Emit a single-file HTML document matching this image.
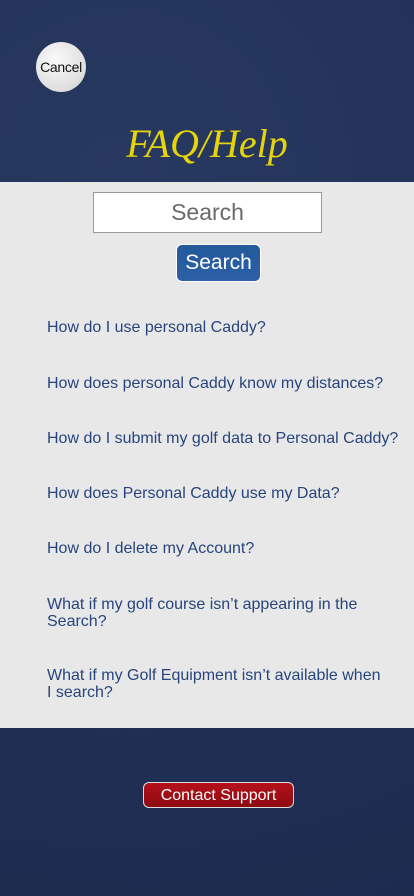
<!DOCTYPE html>
<html><head><meta charset="utf-8"><style>
body{margin:0;width:414px;height:896px;position:relative;overflow:hidden;font-family:"Liberation Sans",Arial,sans-serif;
background:#22325a;}
.tex{position:absolute;left:0;top:0;width:414px;height:896px;
background:radial-gradient(circle at 30% 20%,#283961 0,#213056 60%,#1d2b4f 100%);}
.panel{position:absolute;left:0;top:182px;width:414px;height:546px;background:#e8e8e8;}
.cancel{position:absolute;left:36px;top:42px;width:50px;height:50px;border-radius:50%;
background:radial-gradient(circle at 40% 35%,#fafafa,#dedede 70%,#c8c8c8);font-size:14px;color:#111;
display:flex;align-items:center;justify-content:center;letter-spacing:-0.3px;}
.title{position:absolute;left:0;width:414px;top:120px;text-align:center;color:#e6d40a;
font-family:"Liberation Serif",serif;font-style:italic;font-size:40px;}
.input{position:absolute;left:93px;top:192px;width:227px;height:39px;background:#fff;border:1px solid #999;
text-align:center;font-size:23px;line-height:39px;color:#6a6a6a;}
.btn{position:absolute;left:176px;top:244px;width:85px;height:38px;border-radius:6px;background:linear-gradient(#235a9a,#2c60a8);
border:1px solid #fff;box-sizing:border-box;color:#fff;font-size:21px;line-height:36px;text-align:center;}
.q{position:absolute;left:47px;width:345px;color:#27457c;font-size:16px;line-height:17px;white-space:nowrap;}
.cs{position:absolute;left:143px;top:782px;width:151px;height:26px;border-radius:6px;border:1px solid #ddd;box-sizing:border-box;
background:linear-gradient(#b5111a,#8c0b12);color:#fff;font-size:16px;line-height:26px;text-align:center;}
</style></head><body>
<div class="tex"></div>
<div class="cancel">Cancel</div>
<div class="title">FAQ/Help</div>
<div class="panel"></div>
<div class="input">Search</div>
<div class="btn">Search</div>
<div class="q" style="top:319px">How do I use personal Caddy?</div>
<div class="q" style="top:375px">How does personal Caddy know my distances?</div>
<div class="q" style="top:430px">How do I submit my golf data to Personal Caddy?</div>
<div class="q" style="top:485px">How does Personal Caddy use my Data?</div>
<div class="q" style="top:540px">How do I delete my Account?</div>
<div class="q" style="top:596px">What if my golf course isn’t appearing in the<br>Search?</div>
<div class="q" style="top:667px">What if my Golf Equipment isn’t available when<br>I search?</div>
<div class="cs">Contact Support</div>
</body></html>
